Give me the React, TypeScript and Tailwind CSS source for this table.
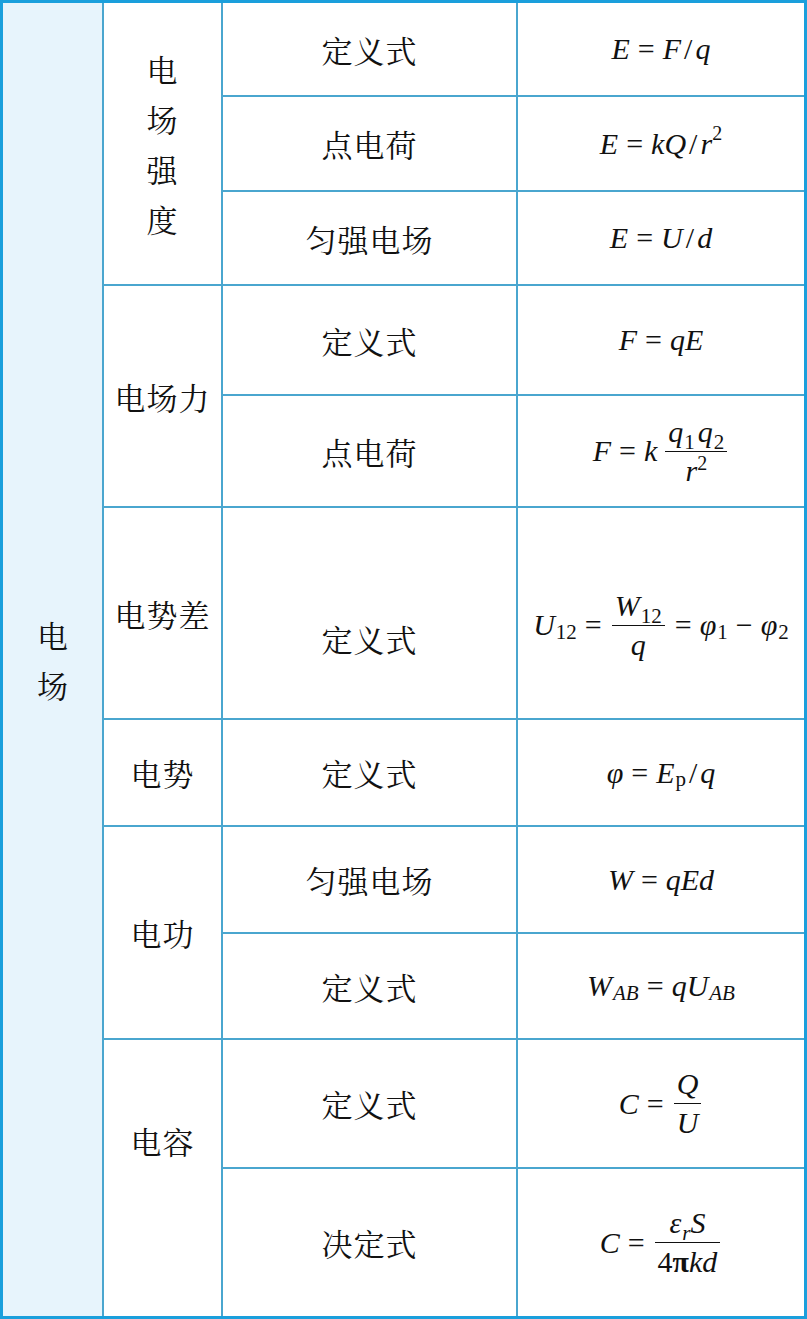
import React from "react";

function I({ children }: { children: React.ReactNode }) {
  return <span className="italic">{children}</span>;
}

function Sub({ children, italic }: { children: React.ReactNode; italic?: boolean }) {
  return (
    <span className={"text-[21px] relative top-[7px] ml-[1px] " + (italic ? "italic" : "")}>
      {children}
    </span>
  );
}

function Sup({ children }: { children: React.ReactNode }) {
  return <span className="text-[20px] relative top-[-11px]">{children}</span>;
}

function Eq() {
  return <span className="mx-[8px]">=</span>;
}

function Frac({ top, bottom }: { top: React.ReactNode; bottom: React.ReactNode }) {
  return (
    <span className="inline-flex flex-col items-center align-middle mx-[2px]">
      <span className="px-[3px] pb-[4px]">{top}</span>
      <span className="self-stretch border-t border-[#111]" />
      <span className="px-[3px] pt-[4px]">{bottom}</span>
    </span>
  );
}

function Cell({ children, className = "" }: { children: React.ReactNode; className?: string }) {
  return (
    <div className={"bg-white flex items-center justify-center [font-family:Noto_Serif_CJK_SC,Noto_Sans_CJK_SC,serif] text-[31px] tracking-[1px] leading-none " + className}>
      {children}
    </div>
  );
}

function MathCell({ children, className = "" }: { children: React.ReactNode; className?: string }) {
  return (
    <div className={"bg-white flex items-center justify-center [font-family:Liberation_Serif,Times_New_Roman,serif] text-[30px] leading-none whitespace-nowrap " + className}>
      {children}
    </div>
  );
}

export default function App() {
  return (
    <div className="w-[807px] h-[1319px] border-[3px] border-[#1a9fdc] bg-[#4aa6cf] grid grid-cols-[99px_117px_293px_286px] grid-rows-[92px_93px_92px_108px_110px_210px_105px_105px_104px_127px_147px] gap-[2px] text-[#111]">
      <div className="row-span-11 bg-[#e7f4fc] flex flex-col items-center justify-center gap-[19px] [font-family:Noto_Serif_CJK_SC,Noto_Sans_CJK_SC,serif] text-[31px] leading-none">
        <span>电</span>
        <span>场</span>
      </div>

      {/* 电场强度 */}
      <Cell className="row-span-3 flex-col gap-[19px]">
        <span>电</span>
        <span>场</span>
        <span>强</span>
        <span>度</span>
      </Cell>
      <Cell>定义式</Cell>
      <MathCell>
        <I>E</I>
        <Eq />
        <I>F</I>
        <span className="mx-[3px]">/</span>
        <I>q</I>
      </MathCell>
      <Cell>点电荷</Cell>
      <MathCell>
        <I>E</I>
        <Eq />
        <I>kQ</I>
        <span className="mx-[3px]">/</span>
        <I>r</I>
        <Sup>2</Sup>
      </MathCell>
      <Cell>匀强电场</Cell>
      <MathCell>
        <I>E</I>
        <Eq />
        <I>U</I>
        <span className="mx-[3px]">/</span>
        <I>d</I>
      </MathCell>

      {/* 电场力 */}
      <Cell className="row-span-2">电场力</Cell>
      <Cell>定义式</Cell>
      <MathCell>
        <I>F</I>
        <Eq />
        <I>qE</I>
      </MathCell>
      <Cell>点电荷</Cell>
      <MathCell>
        <I>F</I>
        <Eq />
        <I>k</I>
        <span className="ml-[6px]" />
        <Frac
          top={
            <>
              <I>q</I>
              <Sub>1</Sub>
              <span className="ml-[3px]" />
              <I>q</I>
              <Sub>2</Sub>
            </>
          }
          bottom={
            <>
              <I>r</I>
              <Sup>2</Sup>
            </>
          }
        />
      </MathCell>

      {/* 电势差 */}
      <Cell>电势差</Cell>
      <Cell className="pt-[50px]">定义式</Cell>
      <MathCell className="pt-[24px]">
        <I>U</I>
        <Sub>12</Sub>
        <Eq />
        <Frac
          top={
            <>
              <I>W</I>
              <Sub>12</Sub>
            </>
          }
          bottom={<I>q</I>}
        />
        <Eq />
        <I>φ</I>
        <Sub>1</Sub>
        <span className="mx-[8px]">−</span>
        <I>φ</I>
        <Sub>2</Sub>
      </MathCell>

      {/* 电势 */}
      <Cell>电势</Cell>
      <Cell>定义式</Cell>
      <MathCell>
        <I>φ</I>
        <Eq />
        <I>E</I>
        <Sub>p</Sub>
        <span className="mx-[3px]">/</span>
        <I>q</I>
      </MathCell>

      {/* 电功 */}
      <Cell className="row-span-2">电功</Cell>
      <Cell>匀强电场</Cell>
      <MathCell>
        <I>W</I>
        <Eq />
        <I>qEd</I>
      </MathCell>
      <Cell>定义式</Cell>
      <MathCell>
        <I>W</I>
        <Sub italic>AB</Sub>
        <Eq />
        <I>qU</I>
        <Sub italic>AB</Sub>
      </MathCell>

      {/* 电容 */}
      <Cell className="row-span-2 pb-[76px]">电容</Cell>
      <Cell>定义式</Cell>
      <MathCell>
        <I>C</I>
        <Eq />
        <Frac top={<I>Q</I>} bottom={<I>U</I>} />
      </MathCell>
      <Cell>决定式</Cell>
      <MathCell>
        <I>C</I>
        <Eq />
        <Frac
          top={
            <>
              <I>ε</I>
              <Sub italic>r</Sub>
              <I>S</I>
            </>
          }
          bottom={
            <>
              4<span className="font-bold">π</span>
              <I>kd</I>
            </>
          }
        />
      </MathCell>
    </div>
  );
}
